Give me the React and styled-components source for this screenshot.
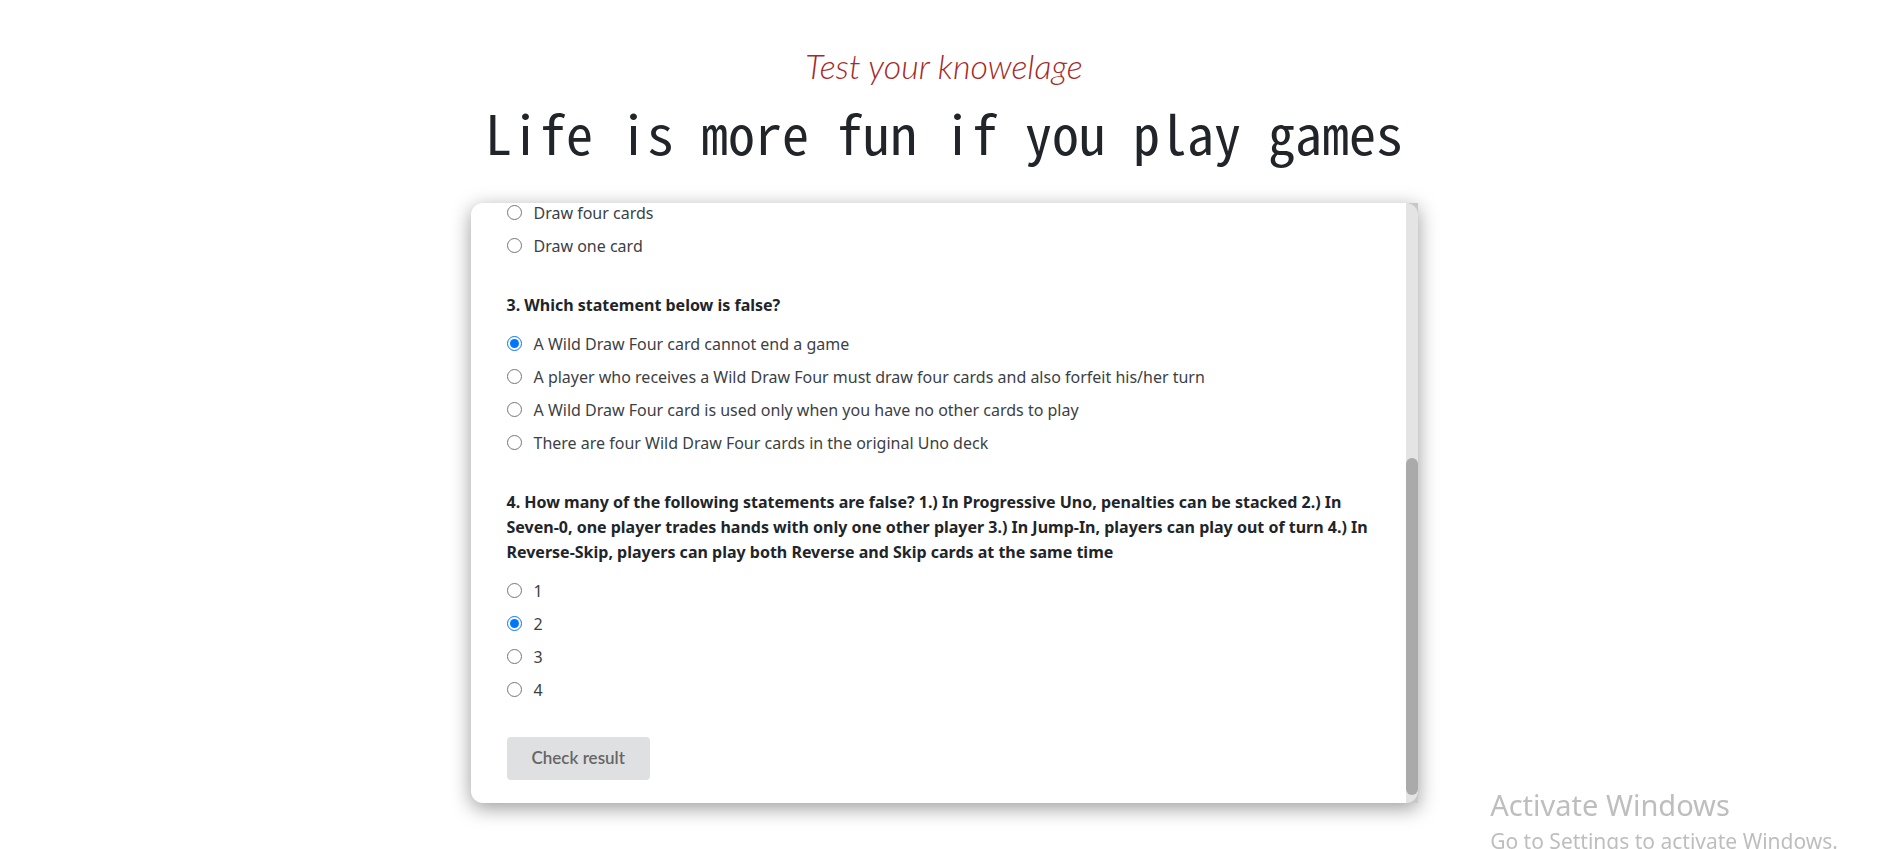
import React, { useState } from "react";
import styled, { createGlobalStyle } from "styled-components";

const GlobalStyle = createGlobalStyle`
  *, *::before, *::after { box-sizing: border-box; }
  body {
    margin: 0;
    background: #fff;
    color: #212529;
    font: 400 16px/25px "Noto Sans", sans-serif;
    overflow: hidden;
  }
`;

const Page = styled.main`
  display: flex;
  flex-direction: column;
  align-items: center;
  padding: 44px 24px 46px;
`;

const Tagline = styled.p`
  margin: 0;
  color: #a52a2a;
  font: italic 300 34px/44px Lato, sans-serif;
`;

const Title = styled.h1`
  margin: 8px 0 36px;
  font: 400 54px/71px "Noto Sans Mono CJK JP", "Liberation Mono", monospace;
  text-align: center;
`;

const Card = styled.section`
  display: flex;
  width: 100%;
  max-width: 947px;
  height: 600px;
  border-radius: 12px 0 0 12px;
  background: #fff;
  box-shadow: 0 5px 20px rgba(0, 0, 0, 0.4);
`;

const Quiz = styled.form`
  flex: 1;
  min-width: 0;
  display: flex;
  flex-direction: column-reverse;
  border-radius: 12px 0 0 12px;
  overflow-y: auto;
  scrollbar-width: none;
`;

const QuizContent = styled.div`
  padding: 0 36px 23px;
`;

const Question = styled.fieldset`
  display: flex;
  flex-direction: column;
  gap: 8px;
  min-width: 0;
  margin: 0 0 34px;
  padding: 0;
  border: 0;
`;

const Prompt = styled.legend`
  margin: 0 0 14px;
  padding: 0;
  font-weight: 700;
  font-size: 16px;
`;

const Option = styled.label`
  display: flex;
  align-items: flex-start;
  gap: 12px;
  color: #3c3f44;
  font-size: 16px;
`;

const Radio = styled.input`
  flex: none;
  width: 15px;
  height: 15px;
  margin: 4px 0 0;
`;

const CheckButton = styled.button`
  display: block;
  height: 43px;
  padding: 0 25px 2px;
  border: 0;
  border-radius: 4px;
  background: #dfe0e2;
  color: #666;
  font: 600 17px/24px Lato, sans-serif;
`;

const ScrollTrack = styled.div`
  display: flex;
  flex-direction: column;
  justify-content: flex-end;
  width: 12px;
  padding-bottom: 8px;
  background: #e4e4e4;
  border-radius: 0 12px 12px 0;
`;

const ScrollCorner = styled.div`
  display: flex;
  background: #c8c8c8;
`;

const ScrollThumb = styled.div`
  height: 57%;
  border-radius: 6px;
  background: #aaa;
`;

const Watermark = styled.aside`
  position: fixed;
  right: 50px;
  bottom: -6px;
  color: #bebebe;
  font-size: 21px;
  line-height: 28px;
`;

const WatermarkTitle = styled.div`
  font-size: 29px;
  line-height: 44px;
`;

const questions = [
  { id: "q2", options: ["Draw four cards", "Draw one card"] },
  {
    id: "q3",
    prompt: "3. Which statement below is false?",
    options: [
      "A Wild Draw Four card cannot end a game",
      "A player who receives a Wild Draw Four must draw four cards and also forfeit his/her turn",
      "A Wild Draw Four card is used only when you have no other cards to play",
      "There are four Wild Draw Four cards in the original Uno deck",
    ],
  },
  {
    id: "q4",
    prompt:
      "4. How many of the following statements are false? 1.) In Progressive Uno, penalties can be stacked 2.) In Seven-0, one player trades hands with only one other player 3.) In Jump-In, players can play out of turn 4.) In Reverse-Skip, players can play both Reverse and Skip cards at the same time",
    options: ["1", "2", "3", "4"],
  },
];

export default function App() {
  const [answers, setAnswers] = useState({ q3: 0, q4: 1 });
  return (
    <>
      <GlobalStyle />
      <Page>
        <Tagline>Test your knowelage</Tagline>
        <Title>Life is more fun if you play games</Title>
        <Card>
          <Quiz>
            <QuizContent>
              {questions.map(({ id, prompt, options }) => (
                <Question key={id}>
                  {prompt && <Prompt>{prompt}</Prompt>}
                  {options.map((text, i) => (
                    <Option key={text}>
                      <Radio
                        type="radio"
                        name={id}
                        checked={answers[id] === i}
                        onChange={() => setAnswers({ ...answers, [id]: i })}
                      />
                      {text}
                    </Option>
                  ))}
                </Question>
              ))}
              <CheckButton type="button" disabled>
                Check result
              </CheckButton>
            </QuizContent>
          </Quiz>
          <ScrollCorner>
            <ScrollTrack>
              <ScrollThumb />
            </ScrollTrack>
          </ScrollCorner>
        </Card>
      </Page>
      <Watermark>
        <WatermarkTitle>Activate Windows</WatermarkTitle>
        Go to Settings to activate Windows.
      </Watermark>
    </>
  );
}
